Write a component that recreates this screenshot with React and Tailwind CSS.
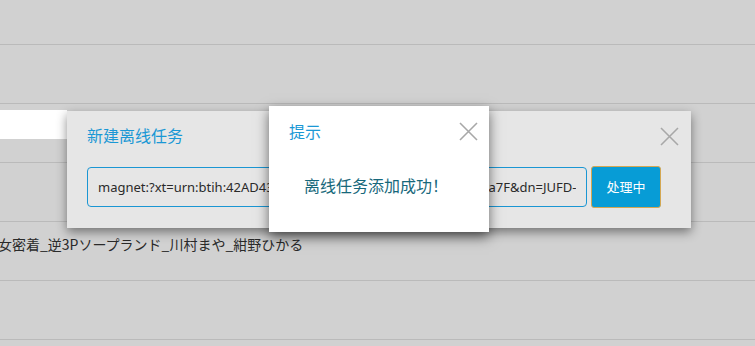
import React from "react";

const CloseIcon = ({ className = "" }) => (
  <svg width="19" height="19" viewBox="0 0 19 19" className={className}>
    <path d="M1 1L18 18M18 1L1 18" stroke="#a8a8a8" strokeWidth="1.6" fill="none" />
  </svg>
);

const cjk = { fontFamily: '"Noto Sans CJK SC", "Noto Sans", sans-serif' };

const App = () => {
  const rows = [0, 1, 2, 3, 4];

  return (
    <div className="relative w-[755px] h-[346px] overflow-hidden bg-[#d1d1d1]" style={cjk}>
      {/* page rows behind the overlay */}
      <div className="h-[45px] border-b border-[#bababa]" />
      {rows.map((i) => (
        <div key={i} className="h-[59px] border-b border-[#bababa]">
          {i === 1 && (
            <div className="pt-[6px]">
              <div className="w-[67px] h-[29px] bg-white" />
            </div>
          )}
          {i === 3 && (
            <div
              className="pt-[12px] ml-[-16px] text-[14px] leading-[20px] text-[#2a2a2a] whitespace-nowrap"
              style={{ fontFamily: '"Noto Sans CJK JP", "Noto Sans", sans-serif' }}
            >
              少女密着_逆3Pソープランド_川村まや_紺野ひかる
            </div>
          )}
        </div>
      ))}

      {/* new offline task dialog */}
      <div className="absolute left-[67px] top-[111px] w-[624px] h-[117px] bg-[#e6e6e6] shadow-[0_4px_10px_rgba(0,0,0,0.45)] px-[20px]">
        <div className="flex items-center justify-between pt-[13px]">
          <span className="text-[16px] leading-[22px] text-[#1a98d5]">新建离线任务</span>
          <CloseIcon className="mr-[-8px] mt-[2px]" />
        </div>
        <div className="flex items-center gap-[4px] mt-[20px]">
          <input
            readOnly
            value="magnet:?xt=urn:btih:42AD4339C1E5B8F0D2A6E7C3B19E8D2F61a7F&dn=JUFD-943_少女密着"
            className="w-[500px] h-[40px] rounded-[4px] border border-[#1a96d3] bg-[#e6e6e6] pl-[10px] pr-[10px] text-[13px] text-[#2a2a2a] outline-none"
            style={{ fontFamily: '"Noto Sans", "Open Sans", sans-serif' }}
          />
          <button className="w-[70px] h-[42px] rounded-[3px] border border-[#d4a752] bg-[#079cd6] text-white text-[13px] font-normal">
            处理中
          </button>
        </div>
      </div>

      {/* alert dialog */}
      <div className="absolute left-[269px] top-[106px] w-[220px] h-[126px] bg-white shadow-[0_5px_12px_rgba(0,0,0,0.55)]">
        <div className="flex items-center justify-between pl-[20px] pr-[11px] pt-[14px]">
          <span className="text-[16px] leading-[22px] text-[#1a98d5]">提示</span>
          <CloseIcon />
        </div>
        <div className="mt-[32px] pl-[35px] text-[16px] leading-[22px] text-[#17687b]">
          离线任务添加成功！
        </div>
      </div>
    </div>
  );
};

export default App;
